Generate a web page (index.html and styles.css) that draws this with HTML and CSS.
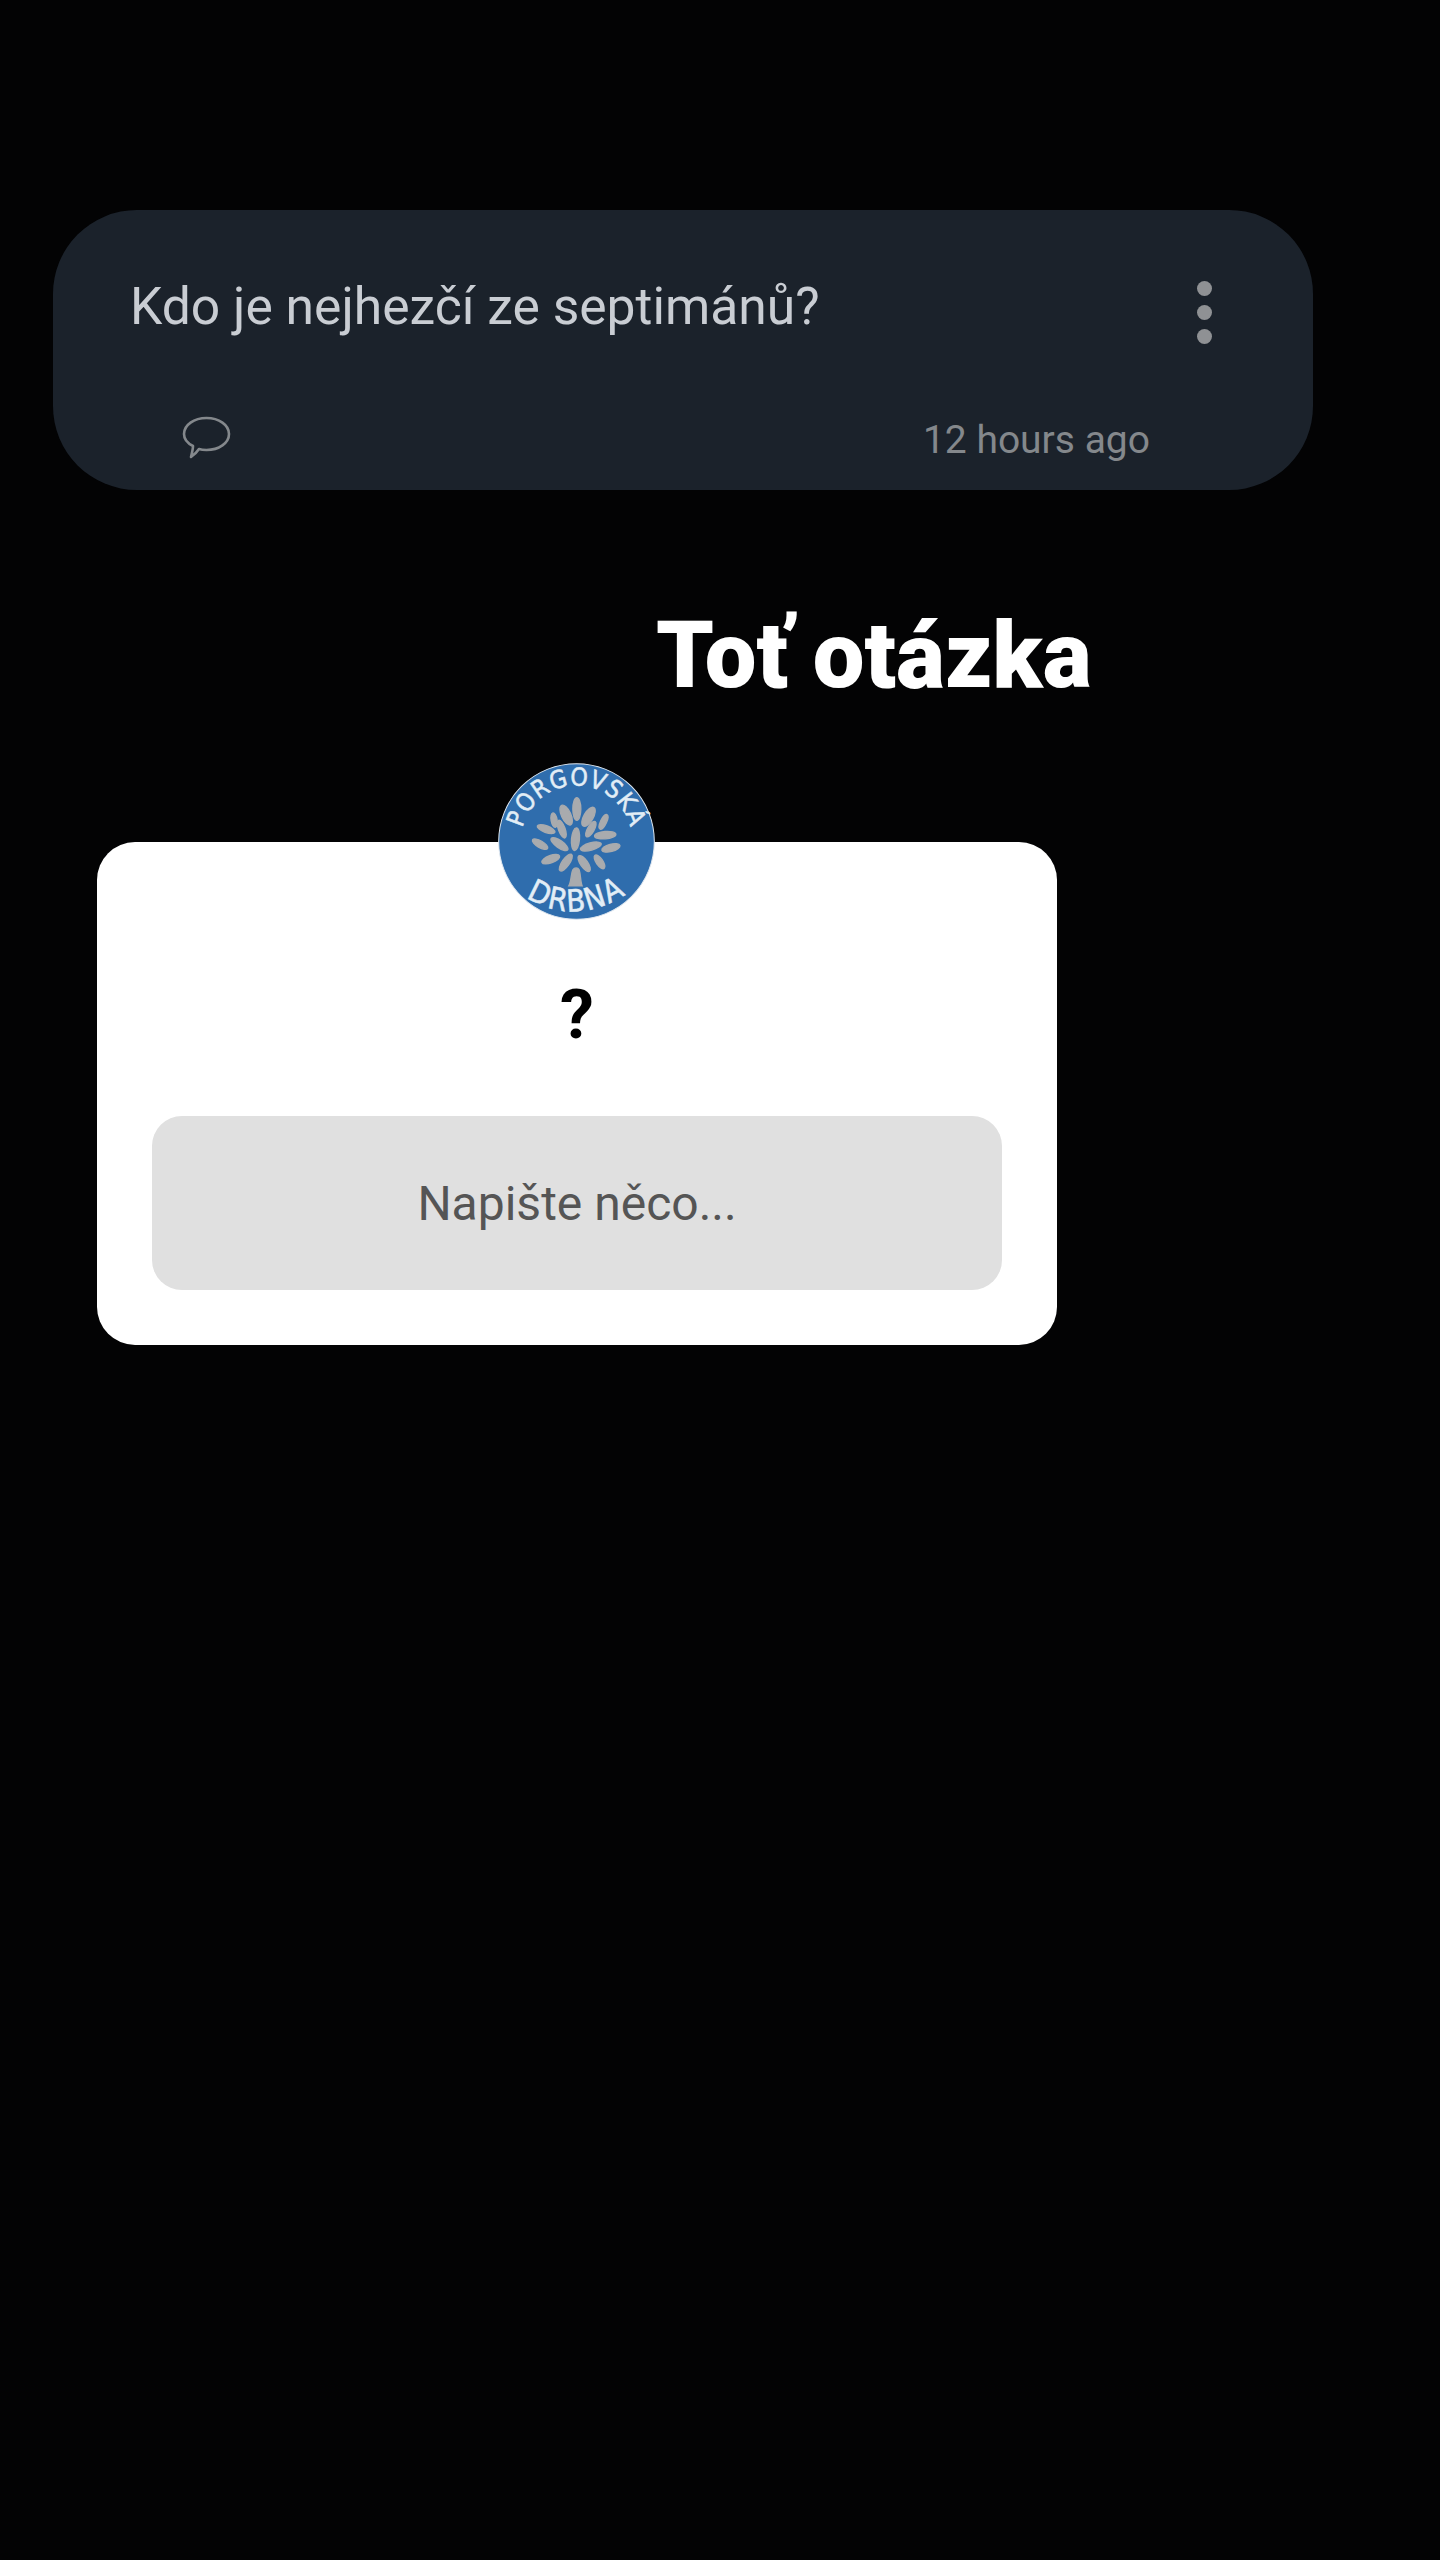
FILE: index.html
```html
<!DOCTYPE html>
<html lang="cs">
<head>
<meta charset="utf-8">
<title>Toť otázka</title>
<link rel="stylesheet" href="styles.css">
</head>
<body>
<main class="page">
  <section class="post">
    <div class="post-top">
      <p class="post-question">Kdo je nejhezčí ze septimánů?</p>
      <div class="post-menu"><span class="dot"></span><span class="dot"></span><span class="dot"></span></div>
    </div>
    <div class="post-bottom">
      <svg class="comment-icon" viewBox="0 0 50 44" aria-hidden="true">
        <path d="M11 30C5 27 2 23 2 18C2 9 12 2 24.5 2S47 9 47 18S37 34 24.5 34C21.5 34 19 33.7 17 33C15 36 12 39 9 41C10 37 11 33 11 30Z"/>
      </svg>
      <span class="post-time">12 hours ago</span>
    </div>
  </section>

  <h1 class="title">Toť otázka</h1>

  <section class="ask">
    <svg class="avatar" viewBox="54 39 470 470" role="img" aria-label="Porgovská drbna">
      <defs>
        <path id="arc-top" d="M128 232A166 166 0 0 1 450 232"/>
        <path id="arc-bottom" d="M140 442Q280 530 438 432"/>
      </defs>
      <circle class="logo-disc" cx="289" cy="274" r="233"/>
      <g class="logo-leaves">
        <ellipse cx="290" cy="172" rx="12" ry="34"/>
        <ellipse cx="258" cy="190" rx="14" ry="32" transform="rotate(-25 258 190)"/>
        <ellipse cx="325" cy="195" rx="14" ry="32" transform="rotate(30 325 195)"/>
        <ellipse cx="222" cy="205" rx="9" ry="22" transform="rotate(-10 222 205)"/>
        <ellipse cx="245" cy="232" rx="10" ry="28" transform="rotate(-20 245 232)"/>
        <ellipse cx="370" cy="210" rx="9" ry="24" transform="rotate(25 370 210)"/>
        <ellipse cx="332" cy="232" rx="10" ry="26" transform="rotate(30 332 232)"/>
        <ellipse cx="198" cy="232" rx="28" ry="10" transform="rotate(20 198 232)"/>
        <ellipse cx="286" cy="262" rx="12" ry="34" transform="rotate(5 286 262)"/>
        <ellipse cx="375" cy="250" rx="32" ry="11" transform="rotate(-5 375 250)"/>
        <ellipse cx="180" cy="277" rx="26" ry="10" transform="rotate(30 180 277)"/>
        <ellipse cx="238" cy="277" rx="30" ry="11" transform="rotate(35 238 277)"/>
        <ellipse cx="332" cy="284" rx="32" ry="11" transform="rotate(-15 332 284)"/>
        <ellipse cx="392" cy="288" rx="28" ry="11" transform="rotate(-15 392 288)"/>
        <ellipse cx="212" cy="322" rx="28" ry="11" transform="rotate(-20 212 322)"/>
        <ellipse cx="257" cy="332" rx="11" ry="30" transform="rotate(35 257 332)"/>
        <ellipse cx="312" cy="335" rx="11" ry="28" transform="rotate(-35 312 335)"/>
        <ellipse cx="358" cy="330" rx="10" ry="24" transform="rotate(-35 358 330)"/>
        <path d="M266 402C274 388 272 366 278 354C283 346 293 346 297 354C302 368 300 388 306 402Z"/>
      </g>
      <text class="logo-text"><textPath href="#arc-top" startOffset="50%" text-anchor="middle">PORGOVSKÁ</textPath></text>
      <text class="logo-text logo-text-lg"><textPath href="#arc-bottom" startOffset="50%" text-anchor="middle">DRBNA</textPath></text>
    </svg>
    <div class="ask-mark">?</div>
    <div class="ask-input">Napište něco...</div>
  </section>
</main>
</body>
</html>
```

FILE: styles.css
```css
* { box-sizing: border-box; }

html, body {
  margin: 0;
  background: #030304;
}

body {
  font-family: Roboto, "Noto Sans", sans-serif;
}

.page {
  width: 1440px;
  height: 2560px;
  padding-top: 210px;
  overflow: hidden;
}

.post {
  width: 1260px;
  height: 280px;
  margin-left: 53px;
  padding: 68px 88px 0 77px;
  background: #1b222b;
  border-radius: 84px;
}

.post-top {
  display: flex;
  justify-content: space-between;
  align-items: flex-start;
  height: 136px;
}

.post-question {
  margin: 0;
  font-size: 51.6px;
  line-height: 58px;
  color: #c9cdd3;
}

.post-menu {
  display: flex;
  flex-direction: column;
  gap: 9px;
  margin: 3px 13px 0 0;
}

.dot {
  width: 15px;
  height: 15px;
  border-radius: 50%;
  background: #8f9194;
}

.post-bottom {
  display: flex;
  justify-content: space-between;
  align-items: flex-start;
  padding: 0 75px 0 52px;
}

.comment-icon {
  width: 50px;
  height: 44px;
  margin-top: 2px;
  fill: none;
  stroke: #84888c;
  stroke-width: 2.6;
  stroke-linejoin: round;
}

.post-time {
  margin-top: 3px;
  font-size: 39px;
  line-height: 46px;
  color: #84888c;
}

.title {
  margin: 112px 0 0 656px;
  font-size: 92px;
  line-height: 108px;
  font-weight: 900;
  color: #fff;
}

.ask {
  position: relative;
  width: 960px;
  height: 503px;
  margin: 132px 0 0 97px;
  padding: 134px 55px 0;
  background: #fff;
  border-radius: 38px;
}

.avatar {
  position: absolute;
  left: 401px;
  top: -79px;
  width: 157px;
  height: 157px;
}

.logo-disc {
  fill: #2f6dad;
  stroke: #dfe7ef;
  stroke-width: 3;
}

.logo-leaves {
  fill: #a9abae;
  stroke: #a9abae;
  stroke-width: 4;
  transform: translateY(5px);
}

.logo-text {
  font-family: "Liberation Sans Narrow", "DejaVu Sans Condensed", "Liberation Sans", sans-serif;
  font-size: 74px;
  letter-spacing: 3px;
  fill: #e2edf6;
  stroke: #e2edf6;
  stroke-width: 1.5;
}

.logo-text-lg {
  font-size: 92px;
  letter-spacing: 5px;
}

.ask-mark {
  height: 140px;
  font-size: 68px;
  line-height: 78px;
  font-weight: 700;
  text-align: center;
  color: #000;
}

.ask-input {
  display: flex;
  align-items: center;
  justify-content: center;
  height: 174px;
  font-size: 48px;
  color: #555;
  background: #e0e0e0;
  border-radius: 30px;
}
```
